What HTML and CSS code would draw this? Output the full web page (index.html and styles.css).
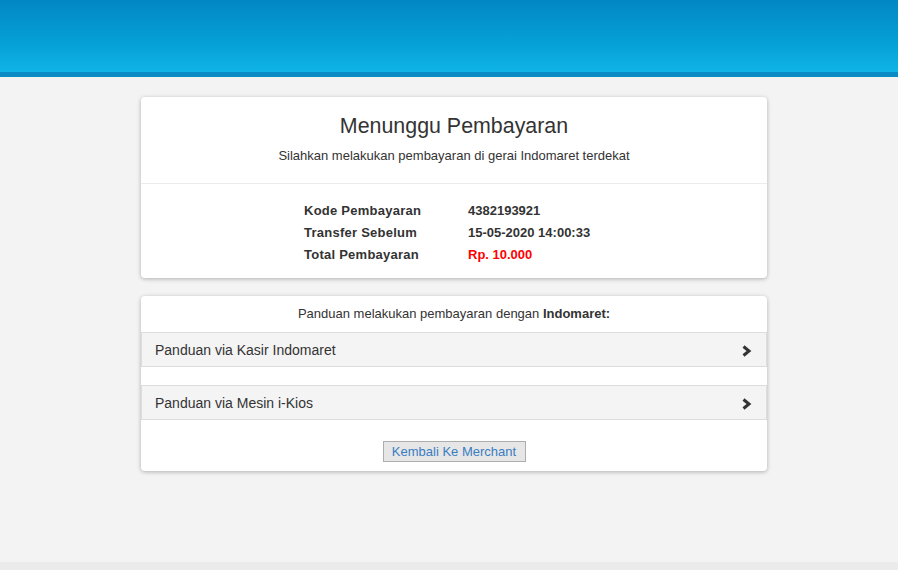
FILE: index.html
```html
<!DOCTYPE html>
<html lang="id">
<head>
<meta charset="utf-8">
<title>Menunggu Pembayaran</title>
<link rel="stylesheet" href="styles.css">
</head>
<body>
<header class="topbar"></header>
<main class="main">
  <section class="card">
    <div class="card-head">
      <h1 class="title">Menunggu Pembayaran</h1>
      <p class="subtitle">Silahkan melakukan pembayaran di gerai Indomaret terdekat</p>
    </div>
    <div class="details">
      <div class="detail-row"><span class="label">Kode Pembayaran</span><span class="value">4382193921</span></div>
      <div class="detail-row"><span class="label">Transfer Sebelum</span><span class="value">15-05-2020 14:00:33</span></div>
      <div class="detail-row"><span class="label">Total Pembayaran</span><span class="value red">Rp. 10.000</span></div>
    </div>
  </section>
  <section class="card guide">
    <p class="guide-title">Panduan melakukan pembayaran dengan <b>Indomaret:</b></p>
    <div class="acc-row">
      <span>Panduan via Kasir Indomaret</span>
      <svg class="chev" width="11" height="12" viewBox="0 0 11 12"><polyline points="2.5,1.5 8,6 2.5,10.5" fill="none" stroke="#333" stroke-width="3"/></svg>
    </div>
    <div class="acc-gap"></div>
    <div class="acc-row">
      <span>Panduan via Mesin i-Kios</span>
      <svg class="chev" width="11" height="12" viewBox="0 0 11 12"><polyline points="2.5,1.5 8,6 2.5,10.5" fill="none" stroke="#333" stroke-width="3"/></svg>
    </div>
    <div class="actions">
      <button class="back-btn" type="button">Kembali Ke Merchant</button>
    </div>
  </section>
</main>
<footer class="footer"></footer>
</body>
</html>
```
FILE: styles.css
```css
html, body {
  margin: 0;
  padding: 0;
}
body {
  background: #f3f3f3;
  font-family: "Liberation Sans", Arial, sans-serif;
  color: #333;
  height: 570px;
  overflow: hidden;
  display: flex;
  flex-direction: column;
}
.topbar {
  height: 72px;
  background: linear-gradient(to bottom, #0287c5 0%, #05a0d6 60%, #10b4e5 100%);
  border-bottom: 5px solid #0a8bc4;
  flex: none;
}
.main {
  flex: 1;
  padding: 20px 0 0 10px;
  display: flex;
  flex-direction: column;
  align-items: center;
  gap: 18px;
}
.card {
  width: 626px;
  background: #fff;
  border-radius: 4px;
  box-shadow: 0 1px 4px rgba(0, 0, 0, 0.28);
  box-sizing: border-box;
}
.card-head {
  text-align: center;
  padding: 15px 0 18px;
  border-bottom: 1px solid #ececec;
}
.title {
  margin: 0;
  font-size: 21.4px;
  font-weight: normal;
  line-height: 28px;
  color: #333;
}
.subtitle {
  margin: 7px 0 0;
  font-size: 13px;
  line-height: 18px;
  color: #333;
}
.details {
  padding: 16px 0 12px 163px;
}
.detail-row {
  display: flex;
  font-size: 13px;
  font-weight: bold;
  line-height: 22px;
  color: #333;
}
.label {
  width: 164px;
  letter-spacing: 0.25px;
}
.red {
  color: #f00;
}
.guide {
  height: 175px;
}
.guide-title {
  margin: 0;
  padding: 7px 0 7px;
  text-align: center;
  font-size: 13px;
  line-height: 22px;
  color: #333;
}
.guide-title b {
  font-weight: bold;
}
.acc-row {
  height: 33px;
  background: #f4f4f4;
  border: 1px solid #ddd;
  display: flex;
  align-items: center;
  justify-content: space-between;
  padding: 0 14px 0 13px;
  font-size: 14px;
  color: #333;
}
.chev {
  margin-top: 2px;
}
.acc-gap {
  height: 18px;
}
.actions {
  display: flex;
  justify-content: center;
  padding-top: 21px;
}
.back-btn {
  width: 143px;
  height: 21px;
  padding: 0;
  background: #e6e6e6;
  border: 1px solid #adadad;
  border-radius: 0;
  font-family: "Liberation Sans", Arial, sans-serif;
  font-size: 13px;
  color: #3a7dc2;
}
.footer {
  height: 8px;
  background: #ebebeb;
  flex: none;
}
```
